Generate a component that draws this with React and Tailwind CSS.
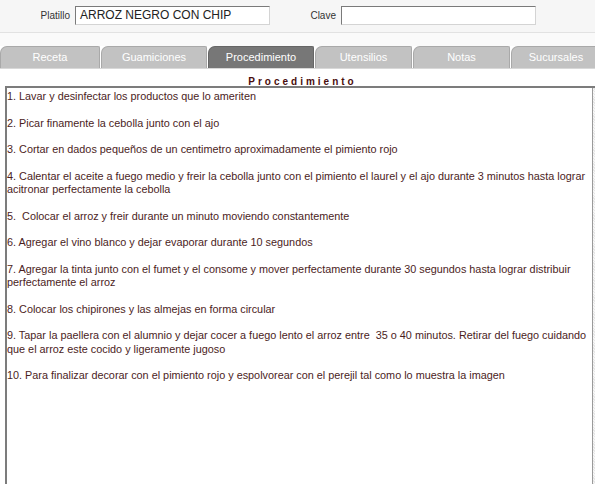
const pasos = [
  '1. Lavar y desinfectar los productos que lo ameriten',
  '2. Picar finamente la cebolla junto con el ajo',
  '3. Cortar en dados pequeños de un centimetro aproximadamente el pimiento rojo',
  '4. Calentar el aceite a fuego medio y freir la cebolla junto con el pimiento el laurel y el ajo durante 3 minutos hasta lograr acitronar perfectamente la cebolla',
  '5.  Colocar el arroz y freir durante un minuto moviendo constantemente',
  '6. Agregar el vino blanco y dejar evaporar durante 10 segundos',
  '7. Agregar la tinta junto con el fumet y el consome y mover perfectamente durante 30 segundos hasta lograr distribuir perfectamente el arroz',
  '8. Colocar los chipirones y las almejas en forma circular',
  '9. Tapar la paellera con el alumnio y dejar cocer a fuego lento el arroz entre  35 o 40 minutos. Retirar del fuego cuidando que el arroz este cocido y ligeramente jugoso',
  '10. Para finalizar decorar con el pimiento rojo y espolvorear con el perejil tal como lo muestra la imagen',
]

const tabs = [
  { label: 'Receta', w: 'w-[100px]' },
  { label: 'Guamiciones', w: 'w-[106px]' },
  { label: 'Procedimiento', w: 'w-[106px]', active: true },
  { label: 'Utensilios', w: 'w-[97px]' },
  { label: 'Notas', w: 'w-[97px]' },
  { label: 'Sucursales', w: 'w-[90px]' },
]

const Campo = ({ label, value, labelW }) => (
  <div className="flex items-center gap-[5px]">
    <span className={`${labelW} text-right text-[10px] text-[#333]`}>{label}</span>
    <div className="w-[195px] h-[19px] bg-white border border-t-[#7a7a7a] border-l-[#7a7a7a] border-b-[#d4d4d4] border-r-[#d4d4d4] px-[4px] text-[12px] leading-[17px] text-[#222]">
      {value}
    </div>
  </div>
)

export default function App() {
  return (
    <div className="w-[595px] h-[484px] overflow-hidden bg-white flex flex-col" style={{ fontFamily: '"Liberation Sans", Arial, sans-serif' }}>
      <div className="h-[33px] bg-[#f6f6f6] border-b border-[#e2e2e2] flex items-center pb-[1px]">
        <Campo label="Platillo" value="ARROZ NEGRO CON CHIP" labelW="w-[70px]" />
        <div className="ml-[-3px]">
          <Campo label="Clave" value="" labelW="w-[69px]" />
        </div>
      </div>

      <div className="h-[13px] bg-[#fafafa]" />

      <div className="flex gap-[1px] h-[23px] border-b border-[#d8d8d8]">
        {tabs.map((t) => (
          <div
            key={t.label}
            className={`${t.w} shrink-0 flex items-center justify-center rounded-tl-[7px] rounded-tr-[2px] border-t border-l border-r text-[11px] text-white ${
              t.active ? 'bg-[#777777] border-[#666666]' : 'bg-[#c2c2c2] border-[#a9a9a9]'
            }`}
          >
            {t.label}
          </div>
        ))}
      </div>

      <div className="h-[17px] pt-[9px] flex justify-center pl-[10px]">
        <span className="text-[10px] font-bold tracking-[3px] text-[#4a0d0d] leading-[8px]">Procedimiento</span>
      </div>

      <div className="flex-1 flex ml-[5px] border-t-2 border-l-2 border-t-[#7c7c7c] border-l-[#7c7c7c]">
        <div className="flex-1 bg-white pt-[2px] text-[10.85px] leading-[13.3px] text-[#4b1d1d] flex flex-col gap-[13.3px]">
          {pasos.map((p) => (
            <p key={p} className="whitespace-pre-wrap">{p}</p>
          ))}
        </div>
        <div className="w-[3px] shrink-0 border-l border-[#9a9a9a] bg-[repeating-linear-gradient(45deg,#e6e6e6_0px,#e6e6e6_1px,#f7f7f7_1px,#f7f7f7_2px)]" />
      </div>
    </div>
  )
}
